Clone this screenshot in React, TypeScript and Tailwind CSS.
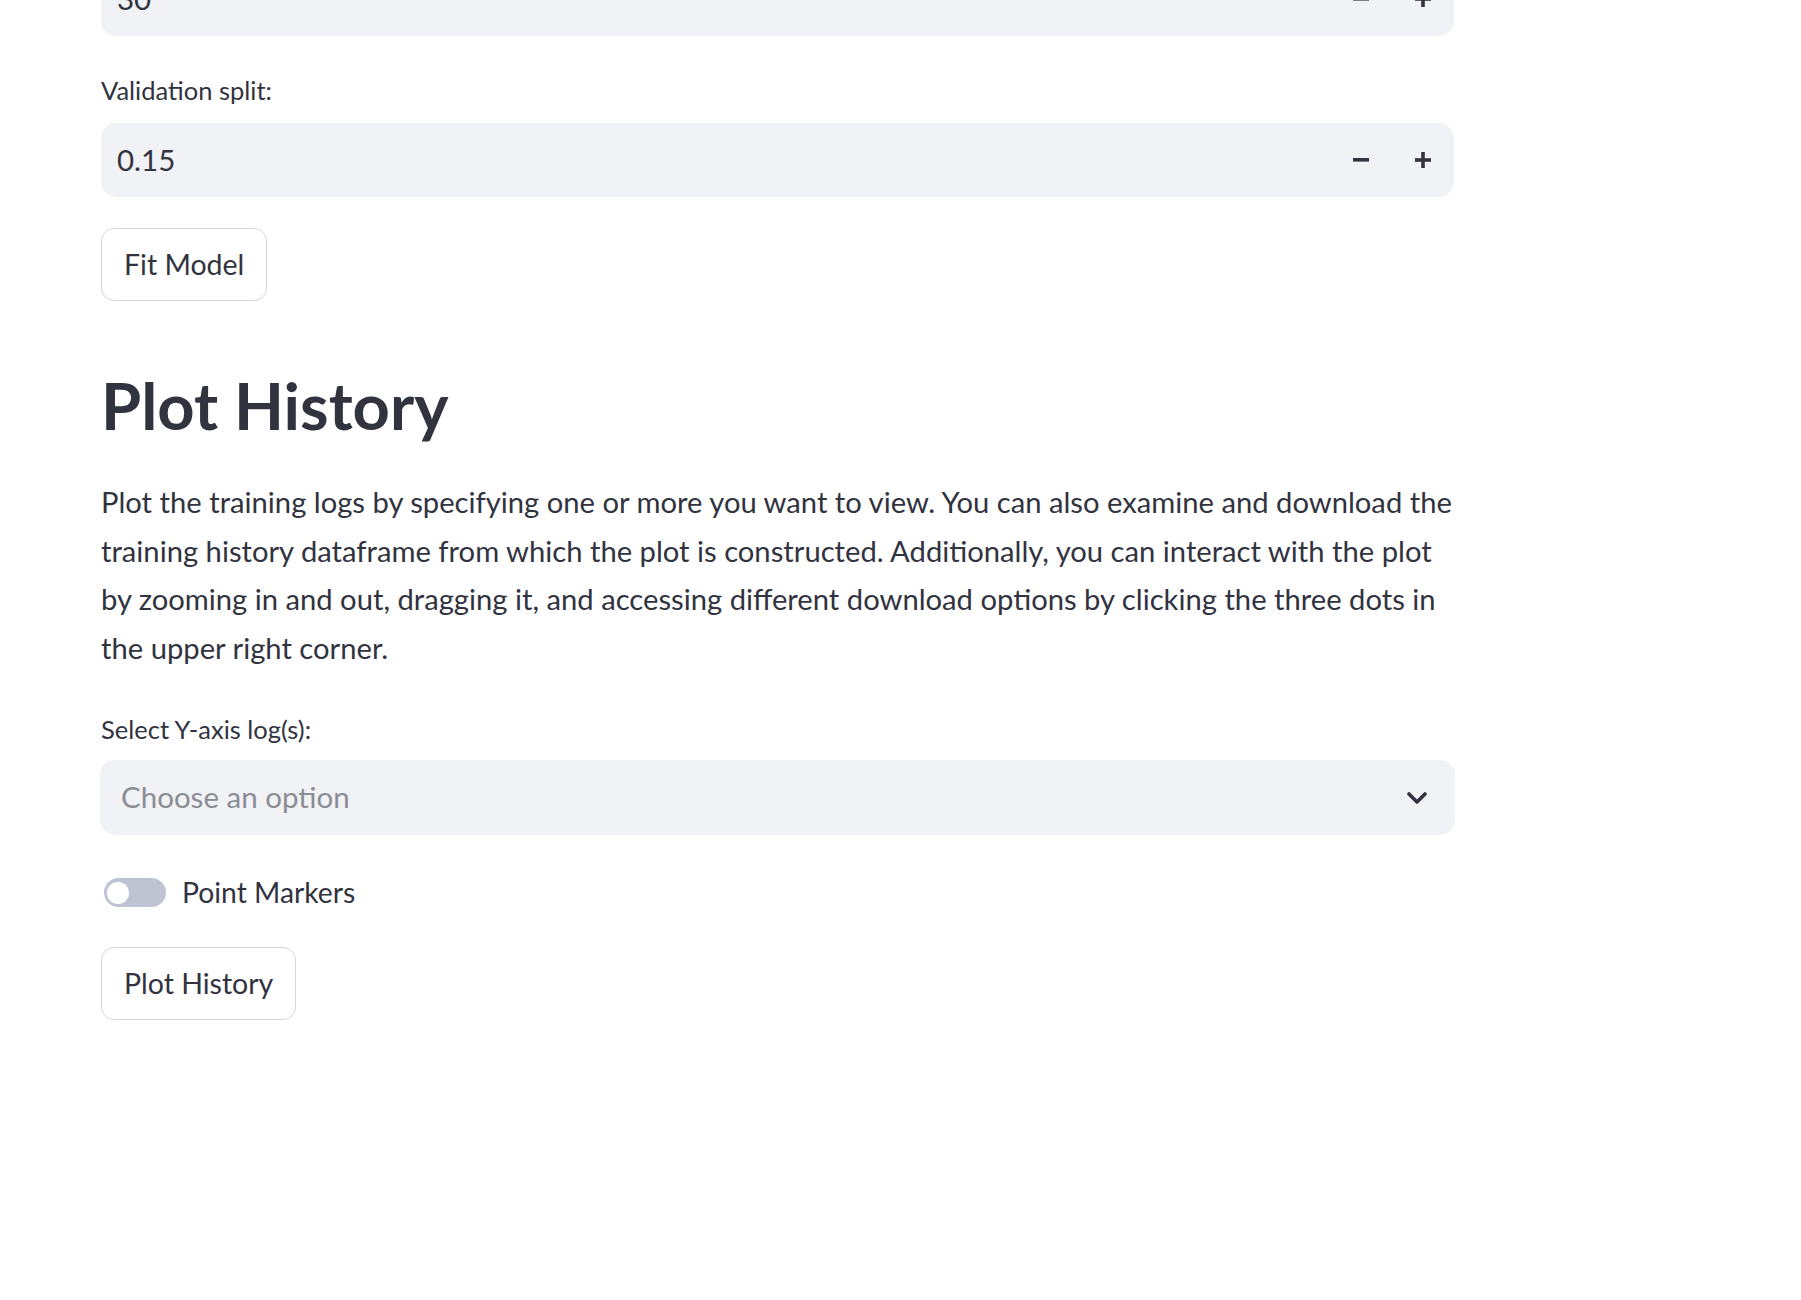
import React from "react";

const font = { fontFamily: "Lato, 'Open Sans', sans-serif" };

function NumberInput({ value, className = "" }: { value: string; className?: string }) {
  return (
    <div
      className={`flex items-center h-[74px] w-[1353px] rounded-[15px] bg-[#f0f2f6] pl-[16px] ${className}`}
    >
      <span className="flex-1 text-[29.5px] text-[#31333f]">{value}</span>
      <div className="flex items-center h-full">
        <button className="w-[62px] h-full flex items-center justify-center">
          <svg width="16" height="4" viewBox="0 0 16 4">
            <rect x="0" y="0" width="16" height="3.6" fill="#31333f" />
          </svg>
        </button>
        <button className="w-[62px] h-full flex items-center justify-center">
          <svg width="16" height="16" viewBox="0 0 16 16">
            <rect x="0" y="6.2" width="16" height="3.6" fill="#31333f" />
            <rect x="6.2" y="0" width="3.6" height="16" fill="#31333f" />
          </svg>
        </button>
      </div>
    </div>
  );
}

function Label({ children, className = "" }: { children: React.ReactNode; className?: string }) {
  return (
    <div className={`h-[36px] leading-[36px] text-[25.5px] text-[#31333f] ${className}`}>
      {children}
    </div>
  );
}

function Btn({ children, className = "" }: { children: React.ReactNode; className?: string }) {
  return (
    <button
      className={`h-[73px] px-[22px] rounded-[13px] border border-[#d6d6d9] bg-white text-[28.5px] text-[#31333f] self-start ${className}`}
    >
      {children}
    </button>
  );
}

export default function App() {
  const lines = [
    "Plot the training logs by specifying one or more you want to view. You can also examine and download the",
    "training history dataframe from which the plot is constructed. Additionally, you can interact with the plot",
    "by zooming in and out, dragging it, and accessing different download options by clicking the three dots in",
    "the upper right corner.",
  ];
  return (
    <div className="w-[1801px] h-[1300px] overflow-hidden bg-white" style={font}>
      <div className="flex flex-col pl-[101px]">
        <NumberInput value="30" className="mt-[-38px]" />
        <Label className="mt-[36px]">Validation split:</Label>
        <NumberInput value="0.15" className="mt-[15px]" />
        <Btn className="mt-[31px]">Fit Model</Btn>

        <h2 className="mt-[65px] h-[78px] leading-[78px] text-[65px] font-bold text-[#31333f]">
          Plot History
        </h2>

        <p className="mt-[34px] text-[29.2px] leading-[48.5px] text-[#31333f]">
          {lines.map((l) => (
            <span key={l} className="block whitespace-nowrap">
              {l}
            </span>
          ))}
        </p>

        <Label className="mt-[39px]">Select Y-axis log(s):</Label>
        <div className="mt-[13px] ml-[-1px] h-[75px] w-[1355px] rounded-[15px] bg-[#f0f2f6] flex items-center pl-[21px] pr-[28px]">
          <span className="flex-1 text-[29.5px] text-[#8b8d95]">Choose an option</span>
          <svg width="20" height="12" viewBox="0 0 20 12">
            <polyline
              points="2,2 10,10 18,2"
              fill="none"
              stroke="#31333f"
              strokeWidth="3.6"
              strokeLinecap="round"
              strokeLinejoin="round"
            />
          </svg>
        </div>

        <div className="mt-[43px] flex items-center h-[29px]">
          <div className="ml-[3px] w-[62px] h-[29px] rounded-full bg-[#bfc4d3] flex items-center pl-[3px]">
            <div className="w-[22px] h-[22px] rounded-full bg-white" />
          </div>
          <span className="ml-[16px] text-[28.3px] text-[#31333f] leading-[29px]">Point Markers</span>
        </div>

        <Btn className="mt-[40px]">Plot History</Btn>
      </div>
    </div>
  );
}
